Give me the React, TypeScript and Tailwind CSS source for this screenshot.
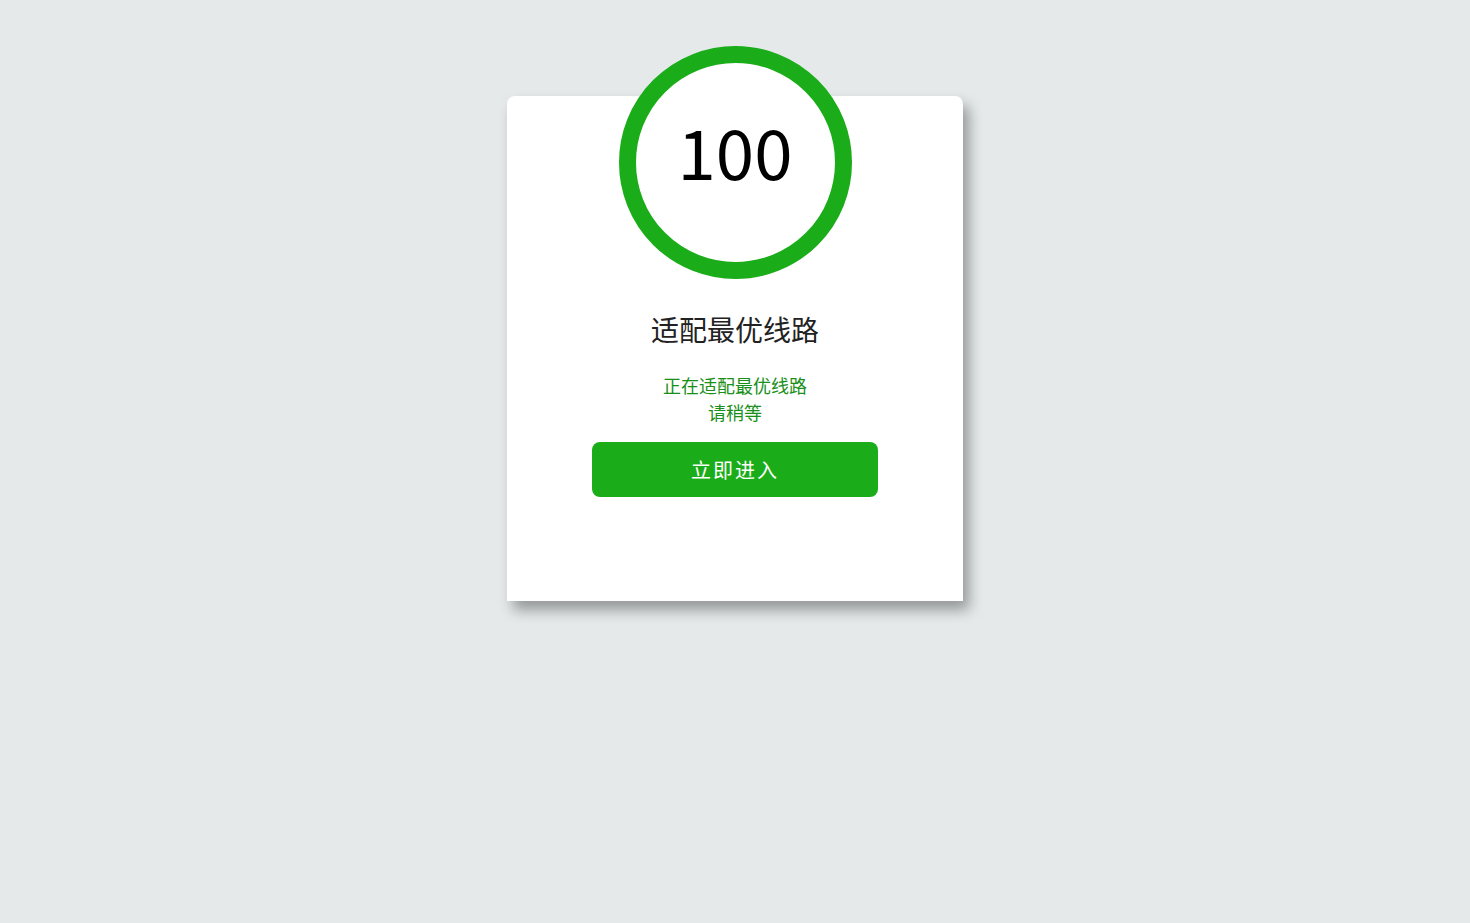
export default function App() {
  return (
    <div className="min-h-screen bg-[#e5e9ea] pt-[96px] font-['Noto_Sans_CJK_SC',sans-serif]">
      <div className="mx-auto flex h-[505px] w-[456px] flex-col items-center rounded-t-lg bg-white shadow-[6px_9px_14px_rgba(0,0,0,0.35)]">
        {/* score ring */}
        <div className="-mt-[50px] flex h-[233px] w-[233px] items-center justify-center rounded-full border-[17px] border-[#1aad19] bg-white pb-6">
          <span className="text-[69px] leading-none text-black">100</span>
        </div>

        <h1 className="mt-[29px] text-[28px] leading-[42px] text-[#222]">适配最优线路</h1>

        <p className="mt-[22px] text-center text-[18px] leading-[27px] text-[#1a8f1a]">
          正在适配最优线路
          <br />
          请稍等
        </p>

        <button className="mt-[16px] h-[55px] w-[286px] rounded-lg bg-[#1aad19] text-[20px] tracking-[2px] text-white">
          立即进入
        </button>
      </div>
    </div>
  )
}
